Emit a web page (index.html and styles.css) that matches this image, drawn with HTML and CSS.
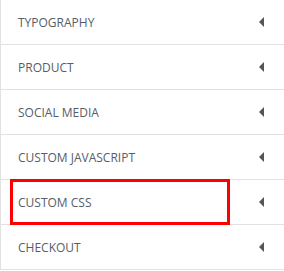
FILE: index.html
```html
<!DOCTYPE html>
<html>
  <head>
    <meta charset="UTF-8" />
    <title>Settings</title>
    <link rel="stylesheet" href="styles.css">
  </head>
  <body>
    <ul class="panel-list">
      <li class="panel-item"><span class="panel-title">Typography</span><span class="caret"></span></li>
      <li class="panel-item"><span class="panel-title">Product</span><span class="caret"></span></li>
      <li class="panel-item"><span class="panel-title">Social Media</span><span class="caret"></span></li>
      <li class="panel-item"><span class="panel-title">Custom Javascript</span><span class="caret"></span></li>
      <li class="panel-item marked"><span class="panel-title">Custom CSS</span><span class="caret"></span><div class="highlight"></div></li>
      <li class="panel-item"><span class="panel-title">Checkout</span><span class="caret"></span></li>
    </ul>
  </body>
</html>
```

FILE: styles.css
```css
body{
	margin:0;
	background:#fff;
}

.panel-list{
	list-style:none;
	margin:0;
	padding:0;
	border-left:1px solid #e2e2e2;
}

.panel-item{
	position:relative;
	display:flex;
	align-items:center;
	justify-content:space-between;
	height:44px;
	padding:0 20px 0 17px;
	border-bottom:1px solid #e2e2e2;
}

.panel-title{
	font-family:"Open Sans", sans-serif;
	font-size:12px;
	text-transform:uppercase;
	color:#555d66;
}

.caret{
	width:0;
	height:0;
	border-top:5px solid transparent;
	border-bottom:5px solid transparent;
	border-right:5px solid #555;
}

/* red marker box round the custom css row */
.highlight{
	position:absolute;
	left:9px;
	top:-1px;
	width:214px;
	height:40px;
	border:3px solid #f00;
}
```
